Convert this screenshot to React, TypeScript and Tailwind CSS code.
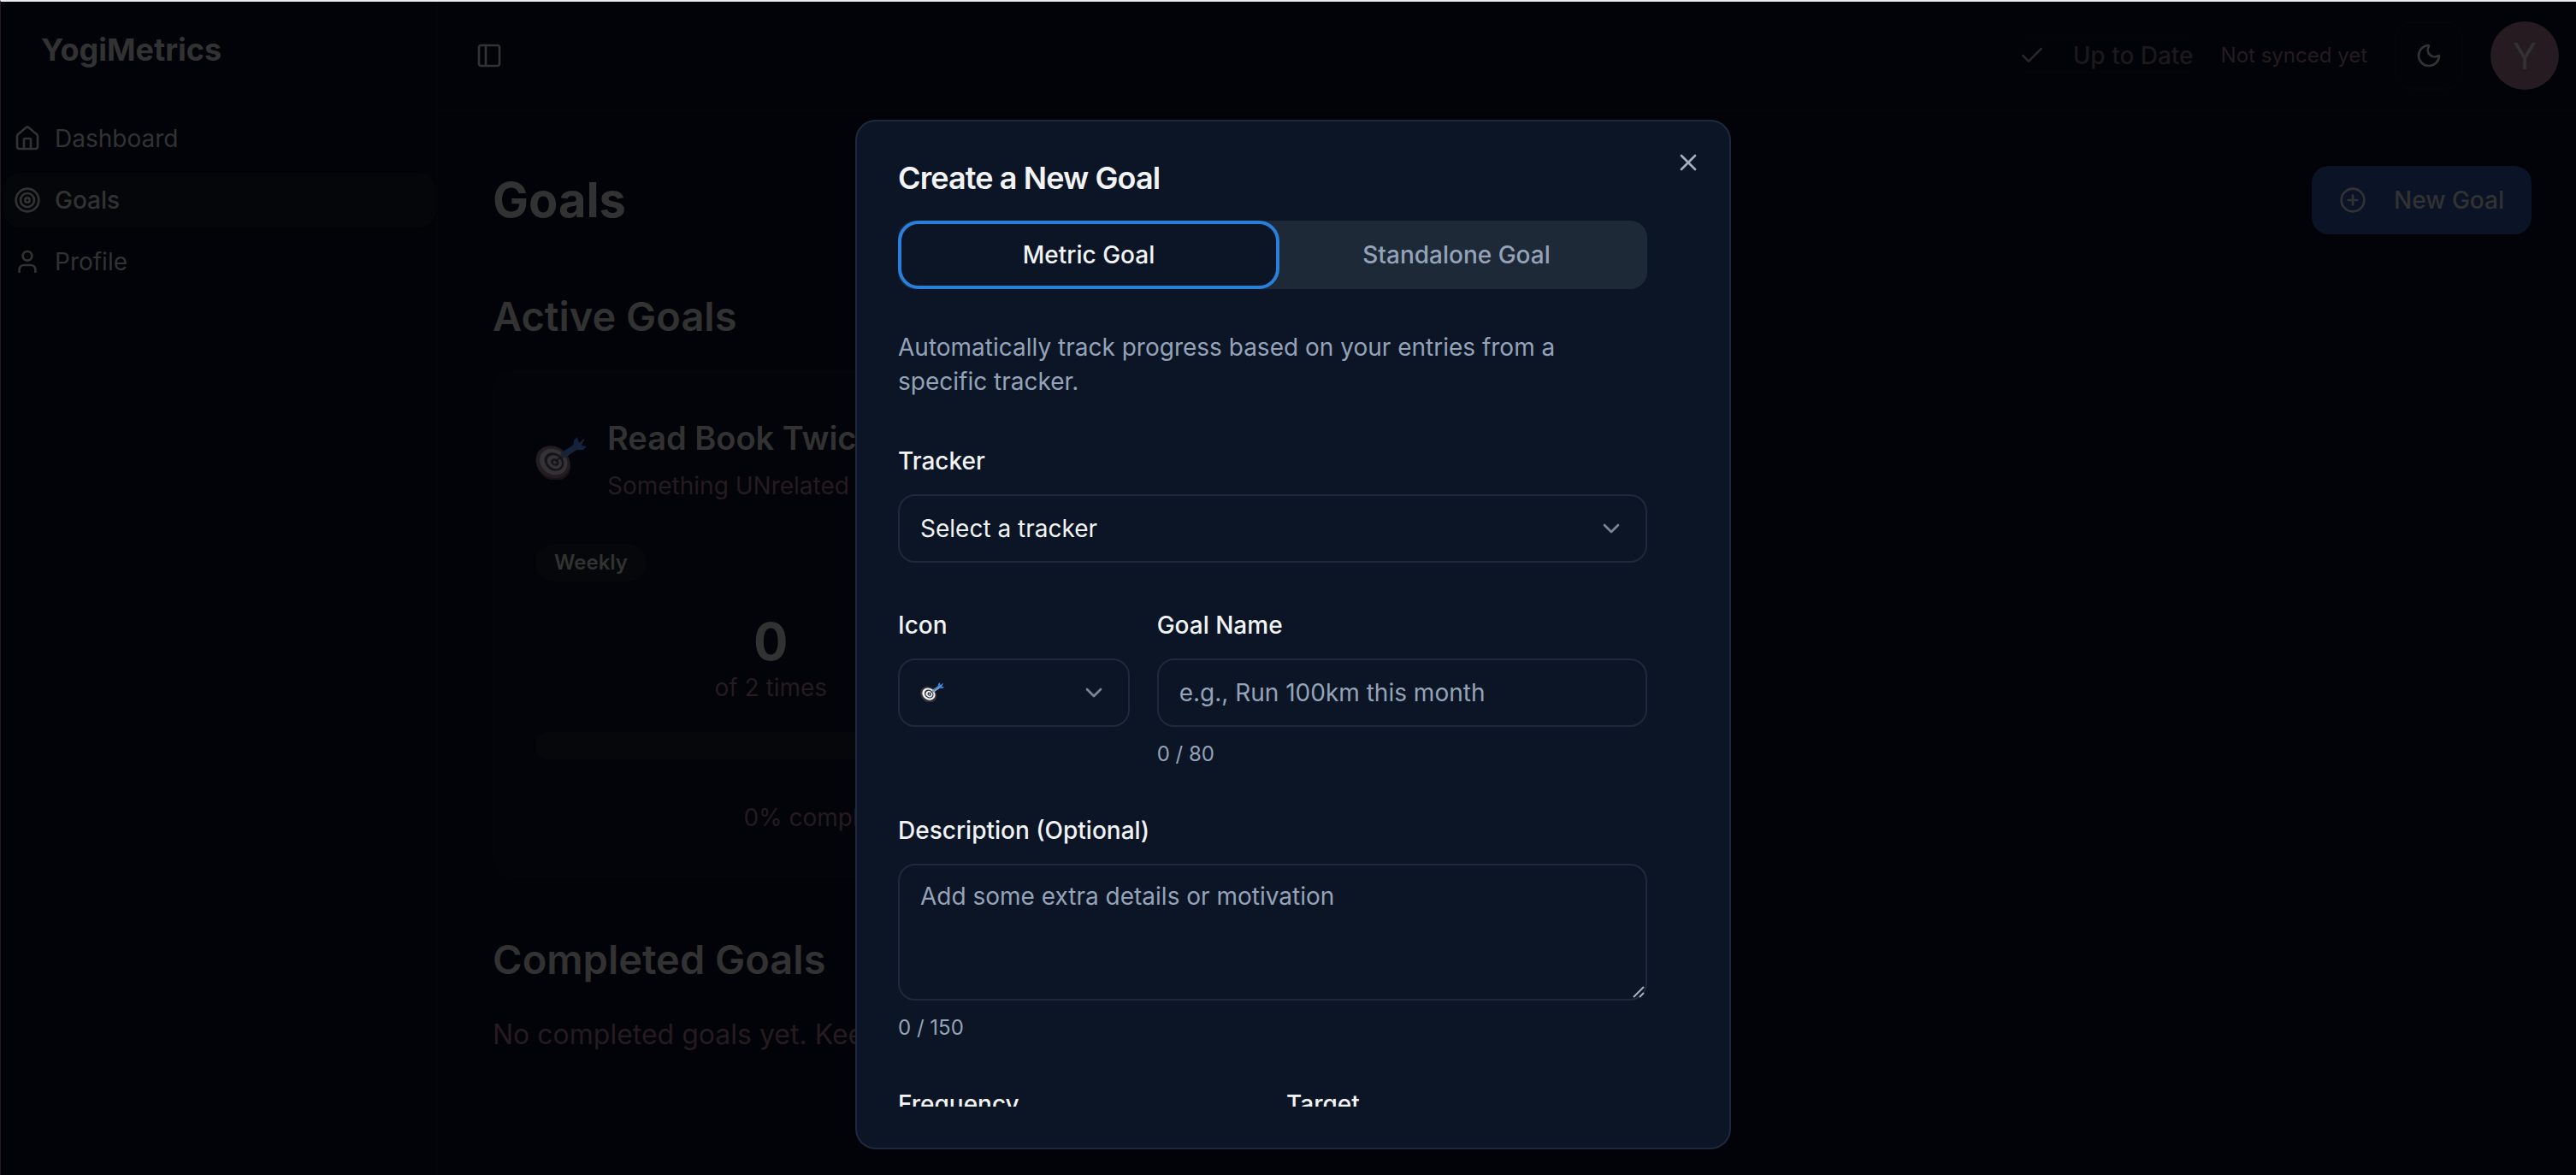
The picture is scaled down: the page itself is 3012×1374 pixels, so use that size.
import React from 'react';
import { Check, ChevronDown, CirclePlus, House, Moon, PanelLeft, Target, User, X } from 'lucide-react';
import clsx from 'clsx';

/* Dart board emoji, shared by the goal card and the icon picker */
const DartBoard: React.FC<{ className?: string; dim?: boolean }> = ({ className, dim }) => {
  const rim = dim ? '#231c20' : '#3f3638';
  const light = dim ? '#333236' : '#f1f4fa';
  const dark = dim ? '#171318' : '#262a36';
  const shaft = dim ? '#1a2233' : '#8fa3bd';
  const blue = dim ? '#12233f' : '#2f7fd6';

  return (
    <svg className={className} viewBox="0 0 60 50" fill="none" aria-hidden="true">
      <g transform="rotate(35 20 30)">
        <ellipse cx="22" cy="31" rx="21" ry="18" fill={dark} />
        <ellipse cx="20" cy="29" rx="21" ry="18" fill={rim} />
        <ellipse cx="20.5" cy="28.5" rx="17" ry="14.5" fill={light} />
        <ellipse cx="21" cy="28" rx="12" ry="10" fill={dark} />
        <ellipse cx="21.5" cy="28" rx="9" ry="7.5" fill={light} />
        <ellipse cx="22" cy="28" rx="5" ry="4" fill={dark} />
        <ellipse cx="22" cy="28" rx="2" ry="2" fill={light} />
      </g>
      <path d="M24 28L35 20" stroke={dark} strokeWidth="2" strokeLinecap="round" />
      <path d="M33 21L48 11" stroke={shaft} strokeWidth="7" strokeLinecap="round" />
      <path d="M35 18L46 11" stroke={blue} strokeWidth="3" strokeLinecap="round" />
      <path d="M44 12L45 4L49 0L51 7L57 3L54 10L60 11L56 15L47 15Z" fill={blue} />
      <path d="M45 14L57 3" stroke={shaft} strokeWidth="2" />
    </svg>
  );
};

const NAV_ITEMS = [
  { label: 'Dashboard', icon: House, active: false },
  { label: 'Goals', icon: Target, active: true },
  { label: 'Profile', icon: User, active: false },
];

const Sidebar: React.FC = () => (
  <aside className="w-[511px] shrink-0 border-r-2 border-[#040509]">
    <div className="h-32 px-[47px] pt-9">
      <span className="text-[36px] leading-10 font-bold text-[#323232]">YogiMetrics</span>
    </div>
    <nav className="flex flex-col gap-2 pl-[3px]">
      {NAV_ITEMS.map(({ label, icon: Icon, active }) => (
        <a
          key={label}
          href="#"
          className={clsx(
            'flex h-16 items-center gap-4 rounded-[20px] px-3 text-[28px] leading-10 text-[#323232]',
            active && 'bg-[#050609] font-medium'
          )}
        >
          <Icon className="size-8" />
          {label}
        </a>
      ))}
    </nav>
  </aside>
);

const Header: React.FC = () => (
  <header className="flex h-32 items-center justify-between border-b-2 border-[#040509] pr-5 pl-11">
    <button aria-label="Toggle sidebar" className="text-[#323232]">
      <PanelLeft className="size-8" />
    </button>

    <div className="flex items-center">
      <div className="flex items-center gap-4 rounded-full border-2 border-[#030409] px-[14px] text-[28px] leading-9 font-medium text-[#1d181c]">
        <Check className="mr-4 size-8 text-[#2a2527]" />
        Up to Date
      </div>
      <span className="ml-4 text-[24px] leading-8 text-[#251b20]">Not synced yet</span>
      <button
        aria-label="Toggle theme"
        className="ml-8 flex size-20 items-center justify-center rounded-[20px] border-2 border-[#040509] text-[#323232]"
      >
        <Moon className="size-8" />
      </button>
      <button className="ml-8 flex size-20 items-center justify-center rounded-full bg-[#251b20] text-[42px] text-[#323232]">
        Y
      </button>
    </div>
  </header>
);

const GoalCard: React.FC = () => (
  <article className="rounded-[24px] border-2 border-[#040509] bg-[#020409] p-12">
    <div className="flex items-center gap-6">
      <DartBoard className="w-[60px] shrink-0" dim />
      <div className="min-w-0">
        <h3 className="truncate text-[38px] leading-[56px] font-semibold text-[#323232]">Read Book Twice</h3>
        <p className="mt-2 truncate text-[28px] leading-10 text-[#251b20]">Something UNrelated to work</p>
      </div>
    </div>

    <div className="mt-12 flex">
      <span className="rounded-full bg-[#05070a] px-[22px] py-[6px] text-[24px] leading-8 font-semibold text-[#323232]">
        Weekly
      </span>
    </div>

    <div className="mt-10 pr-28 text-center">
      <p className="text-[60px] leading-[60px] font-bold text-[#323232]">0</p>
      <p className="mt-1 text-[28px] leading-10 text-[#251b20]">of 2 times</p>
    </div>

    <div className="mt-8 h-8 rounded-full bg-[#05070a]" />
    <p className="mt-12 text-center text-[28px] leading-10 text-[#251b20]">0% complete</p>
  </article>
);

const GoalsPage: React.FC = () => (
  <main className="pt-16 pr-[52px] pl-16">
    <div className="flex items-start justify-between">
      <h1 className="text-[56px] leading-[80px] font-bold text-[#323232]">Goals</h1>
      <button className="flex h-20 items-center gap-8 rounded-[20px] bg-[#0b1426] px-8 text-[28px] font-medium text-[#323232]">
        <CirclePlus className="size-8" />
        New Goal
      </button>
    </div>

    <h2 className="mt-16 text-[47px] leading-[64px] font-semibold text-[#323232]">Active Goals</h2>
    <div className="mt-8 grid grid-cols-3 gap-12">
      <GoalCard />
    </div>

    <h2 className="mt-16 text-[47px] leading-[64px] font-semibold text-[#323232]">Completed Goals</h2>
    <p className="mt-8 text-[32px] leading-[48px] text-[#251b20]">No completed goals yet. Keep going!</p>
  </main>
);

const FIELD = 'w-full rounded-[20px] border-2 border-[#1e293b] bg-[#0c1526] px-6 text-[28px] leading-10';
const LABEL = 'block pb-[2px] text-[28px] leading-[26px] font-medium text-[#f1f3f5]';
const COUNTER = 'mt-4 text-[24px] leading-8 text-[#94a3b8]';

const SelectField: React.FC<{ id: string; children: React.ReactNode }> = ({ id, children }) => (
  <div className="relative mt-6">
    <select id={id} className={clsx(FIELD, 'h-20 appearance-none text-[#f1f3f5]')}>
      {children}
    </select>
    <ChevronDown className="pointer-events-none absolute top-6 right-[26px] size-8 text-[#7b8596]" />
  </div>
);

const CreateGoalDialog: React.FC = () => (
  <div className="fixed inset-0 flex justify-center pt-[140px] pb-[30px] pl-3">
    <div
      role="dialog"
      aria-labelledby="dialog-title"
      className="relative flex w-full max-w-[1024px] flex-col rounded-[24px] border-2 border-[#1e293b] bg-[#0c1526] p-12"
    >
      <button aria-label="Close" className="absolute top-8 right-8 text-[#a4adbd]">
        <X className="size-8" />
      </button>

      <h2 id="dialog-title" className="text-[36px] leading-9 font-semibold tracking-tight text-[#f1f3f5]">
        Create a New Goal
      </h2>

      <div className="mt-8 min-h-0 flex-1 overflow-hidden pr-12">
        <div role="tablist" className="flex h-20 rounded-[20px] bg-[#1e2938] text-[28px] font-medium">
          <button
            role="tab"
            aria-selected="true"
            className="z-10 -mr-2 flex-1 rounded-[24px] border-4 border-[#2980dc] bg-[#0c1526] text-[#f1f3f5]"
          >
            Metric Goal
          </button>
          <button
            role="tab"
            aria-selected="false"
            className="-ml-2 flex-1 rounded-[24px] border-4 border-transparent text-[#94a3b8]"
          >
            Standalone Goal
          </button>
        </div>

        <p className="mt-12 text-[28px] leading-10 text-[#94a3b8]">
          Automatically track progress based on your entries from a specific tracker.
        </p>

        <form className="mt-[60px] flex flex-col gap-[60px]">
          <div>
            <label htmlFor="tracker" className={LABEL}>Tracker</label>
            <SelectField id="tracker">
              <option>Select a tracker</option>
            </SelectField>
          </div>

          <div className="grid grid-cols-3 gap-8">
            <div>
              <label htmlFor="icon" className={LABEL}>Icon</label>
              <div className="relative">
                <SelectField id="icon">
                  <option aria-label="Target">&nbsp;</option>
                </SelectField>
                <DartBoard className="pointer-events-none absolute top-7 left-[26px] w-7" />
              </div>
            </div>
            <div className="col-span-2">
              <label htmlFor="name" className={LABEL}>Goal Name</label>
              <input
                id="name"
                type="text"
                placeholder="e.g., Run 100km this month"
                className={clsx(FIELD, 'mt-6 h-20 placeholder:text-[#94a3b8]')}
              />
              <p className={COUNTER}>0 / 80</p>
            </div>
          </div>

          <div>
            <label htmlFor="description" className={LABEL}>Description (Optional)</label>
            <div className="relative mt-6">
              <textarea
                id="description"
                placeholder="Add some extra details or motivation"
                className={clsx(FIELD, 'block h-40 resize-none py-4 placeholder:text-[#94a3b8]')}
              />
              <svg className="absolute right-[2px] bottom-[2px] size-4" viewBox="0 0 16 16" aria-hidden="true">
                <path d="M2 14L14 2M9 14L14 9" stroke="#a9afb9" strokeWidth="2" />
              </svg>
            </div>
            <p className={COUNTER}>0 / 150</p>
          </div>

          <div className="grid grid-cols-2 gap-8">
            <div>
              <label htmlFor="frequency" className={LABEL}>Frequency</label>
              <SelectField id="frequency">
                <option>&nbsp;</option>
              </SelectField>
            </div>
            <div>
              <label htmlFor="target" className={LABEL}>Target</label>
              <input id="target" type="number" className={clsx(FIELD, 'mt-6 h-20')} />
            </div>
          </div>
        </form>
      </div>
    </div>
  </div>
);

export default function App() {
  return (
    <div className="flex min-h-screen border-t-2 border-l border-t-[#e8ecee] border-l-[#251b20] bg-[#020308] font-['Inter',sans-serif]">
      <Sidebar />
      <div className="min-w-0 flex-1">
        <Header />
        <GoalsPage />
      </div>
      <CreateGoalDialog />
    </div>
  );
}
